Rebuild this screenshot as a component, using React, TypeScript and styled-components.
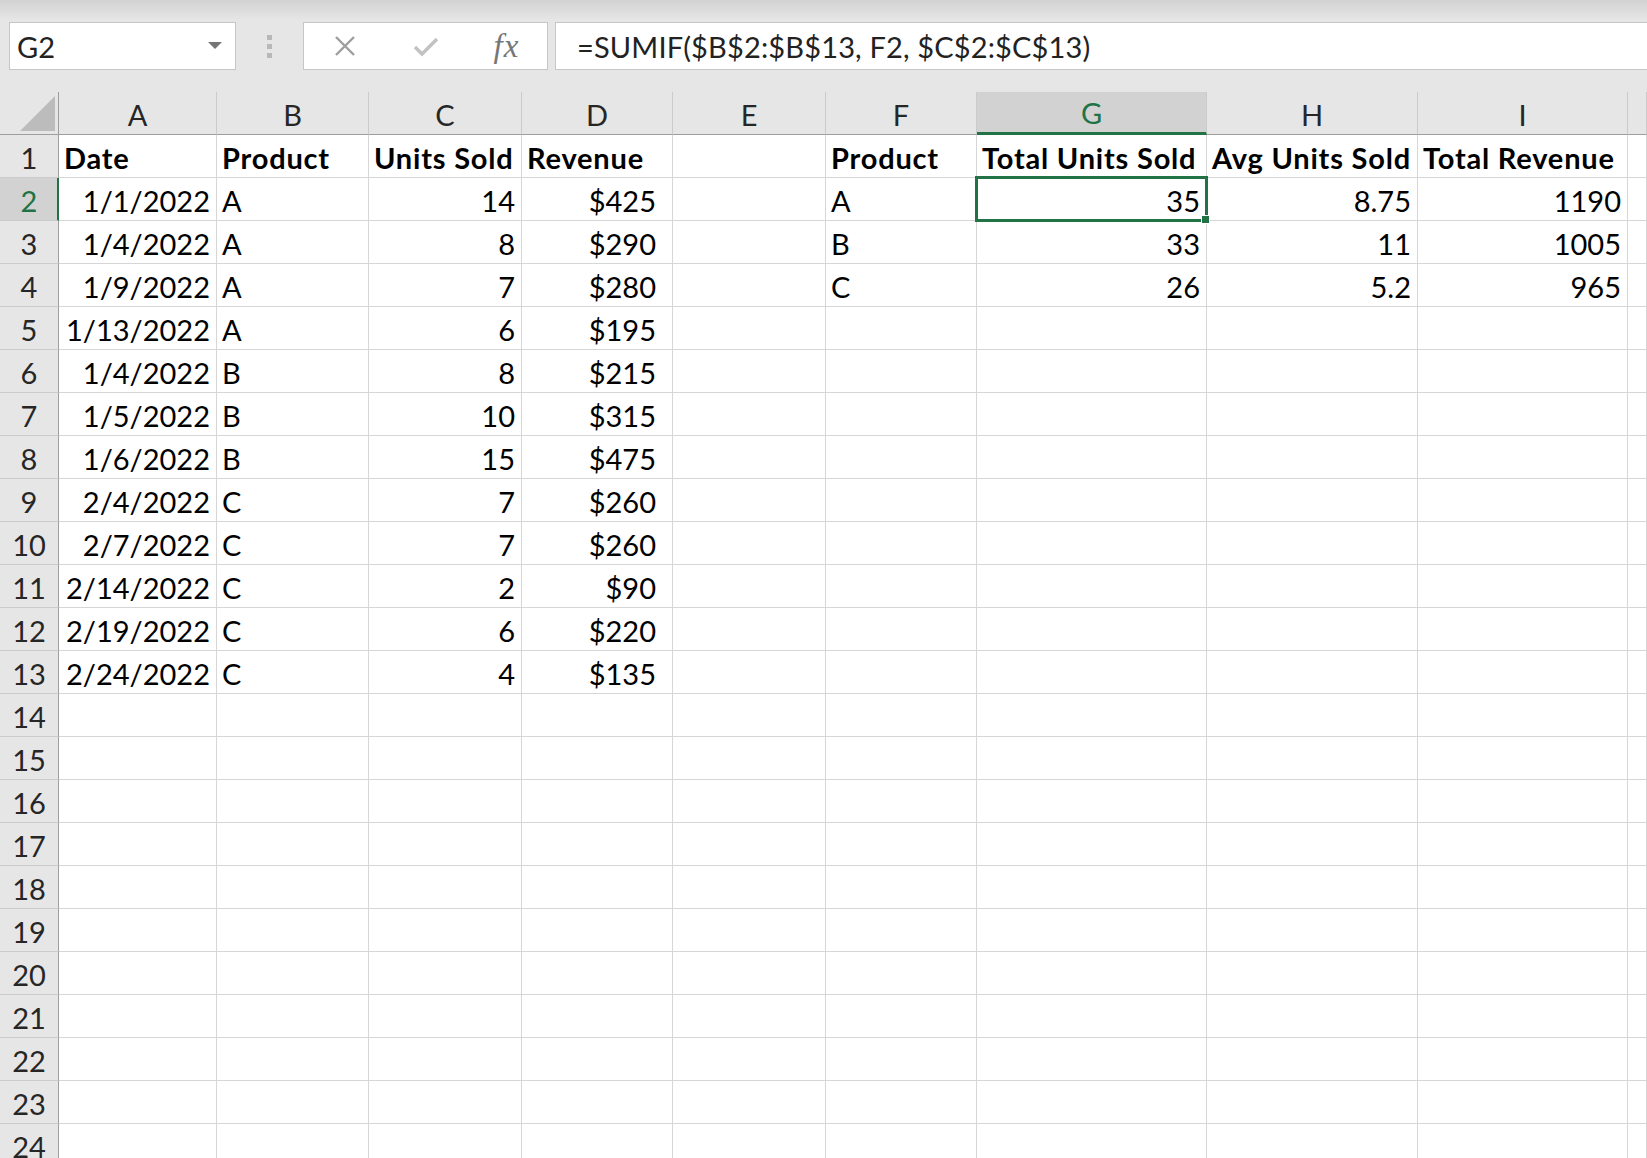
import React from 'react';
import styled, {createGlobalStyle, css} from 'styled-components';

const GREEN = '#217346';

const GlobalStyle = createGlobalStyle`
  html, body {
    margin: 0;
    padding: 0;
  }
  body {
    font-family: Lato, "Noto Sans", sans-serif;
    background: #e6e6e6;
  }
`;

const Page = styled.div`
  width: 100vw;
  height: 100vh;
  overflow: hidden;
  display: flex;
  flex-direction: column;
  background: linear-gradient(#d2d2d2 0, #e6e6e6 20px);
`;

const Toolbar = styled.div`
  display: flex;
  height: 48px;
  margin: 22px 0 22px 9px;
`;

const NameBox = styled.div`
  box-sizing: border-box;
  width: 227px;
  height: 48px;
  background: white;
  border: 1px solid #c6c6c6;
  display: flex;
  align-items: center;
  justify-content: space-between;
  padding: 0 13px 0 7px;
  font-size: 29px;
  color: #222;
`;

const Grip = styled.div`
  width: 67px;
  display: flex;
  align-items: center;
  justify-content: center;
`;

const FxBox = styled.div`
  box-sizing: border-box;
  width: 245px;
  height: 48px;
  background: white;
  border: 1px solid #c6c6c6;
  display: flex;
  align-items: center;
`;

const FxSlot = styled.div`
  width: 81px;
  display: flex;
  justify-content: center;
  align-items: center;
`;

const FxLabel = styled.span`
  font-family: "Liberation Serif", serif;
  font-style: italic;
  font-size: 33px;
  color: #777;
  letter-spacing: 1px;
`;

const FormulaInput = styled.div`
  box-sizing: border-box;
  flex: 1;
  margin-left: 7px;
  height: 48px;
  background: white;
  border: 1px solid #c6c6c6;
  border-right: none;
  display: flex;
  align-items: center;
  padding-left: 21px;
  font-size: 29px;
  letter-spacing: 0.15px;
  color: #222;
  white-space: nowrap;
`;

const Sheet = styled.div`
  display: grid;
  grid-template-columns: 59px 158px 152px 153px 151px 153px 151px 230px 211px 210px 1fr;
  grid-auto-rows: 43px;
  background: white;
`;

const Corner = styled.div`
  box-sizing: border-box;
  background: #e6e6e6;
  border-right: 1px solid #9e9e9e;
  border-bottom: 1px solid #9e9e9e;
  display: flex;
  align-items: flex-end;
  justify-content: flex-end;
  padding: 0 3px 3px 0;
`;

const ColHead = styled.div<{$active?: boolean}>`
  box-sizing: border-box;
  background: #e6e6e6;
  border-right: 1px solid #cbcbcb;
  border-bottom: 1px solid #9e9e9e;
  display: flex;
  align-items: center;
  justify-content: center;
  padding-top: 3px;
  font-size: 29px;
  color: #262626;
  ${p => p.$active && css`
    background: #d2d2d2;
    border-bottom: 3px solid ${GREEN};
    padding-top: 1px;
    color: ${GREEN};
  `}
`;

const RowHead = styled.div<{$active?: boolean}>`
  box-sizing: border-box;
  background: #e6e6e6;
  border-right: 1px solid #9e9e9e;
  border-bottom: 1px solid #cbcbcb;
  display: flex;
  align-items: center;
  justify-content: center;
  padding-top: 3px;
  font-size: 29px;
  color: #262626;
  ${p => p.$active && css`
    background: #d2d2d2;
    border-right: 2px solid ${GREEN};
    padding-left: 1px;
    color: ${GREEN};
  `}
`;

const Cell = styled.div<{$right?: boolean; $bold?: boolean; $pad?: number}>`
  box-sizing: border-box;
  position: relative;
  border-right: 1px solid #d6d6d6;
  border-bottom: 1px solid #d6d6d6;
  display: flex;
  align-items: center;
  justify-content: ${p => (p.$right ? 'flex-end' : 'flex-start')};
  padding: 3px ${p => p.$pad ?? 6}px 0 5px;
  font-size: 29px;
  font-weight: ${p => (p.$bold ? 700 : 400)};
  letter-spacing: ${p => (p.$bold ? '0.8px' : '0')};
  color: #000;
  white-space: nowrap;
`;

const Selection = styled.div`
  position: absolute;
  top: -2px;
  left: -2px;
  right: -2px;
  bottom: -2px;
  border: 3px solid ${GREEN};
  z-index: 2;
  pointer-events: none;
`;

const Handle = styled.div`
  position: absolute;
  right: -5px;
  bottom: -5px;
  width: 7px;
  height: 7px;
  background: ${GREEN};
  border: 1px solid white;
`;

type Row = [string, string, string, string];

const data: Row[] = [
  ['1/1/2022', 'A', '14', '$425'],
  ['1/4/2022', 'A', '8', '$290'],
  ['1/9/2022', 'A', '7', '$280'],
  ['1/13/2022', 'A', '6', '$195'],
  ['1/4/2022', 'B', '8', '$215'],
  ['1/5/2022', 'B', '10', '$315'],
  ['1/6/2022', 'B', '15', '$475'],
  ['2/4/2022', 'C', '7', '$260'],
  ['2/7/2022', 'C', '7', '$260'],
  ['2/14/2022', 'C', '2', '$90'],
  ['2/19/2022', 'C', '6', '$220'],
  ['2/24/2022', 'C', '4', '$135'],
];

const summary: Row[] = [
  ['A', '35', '8.75', '1190'],
  ['B', '33', '11', '1005'],
  ['C', '26', '5.2', '965'],
];

const columns = ['A', 'B', 'C', 'D', 'E', 'F', 'G', 'H', 'I', ''];

function Toolbars() {
  return (
    <Toolbar>
      <NameBox>
        <span>G2</span>
        <svg width="14" height="8" viewBox="0 0 14 8">
          <path d="M0 0H14L7 7Z" fill="#767676"/>
        </svg>
      </NameBox>
      <Grip>
        <svg width="5" height="23" viewBox="0 0 5 23">
          <rect x="0" y="0" width="5" height="5" fill="#b8b8b8"/>
          <rect x="0" y="9" width="5" height="5" fill="#b8b8b8"/>
          <rect x="0" y="18" width="5" height="5" fill="#b8b8b8"/>
        </svg>
      </Grip>
      <FxBox>
        <FxSlot>
          <svg width="22" height="20" viewBox="0 0 22 20">
            <path d="M2 1L20 19M20 1L2 19" stroke="#9e9e9e" strokeWidth="2.4"/>
          </svg>
        </FxSlot>
        <FxSlot>
          <svg width="26" height="21" viewBox="0 0 26 21">
            <path d="M2 11L9 18L24 3" stroke="#c2c2c2" strokeWidth="3.4" fill="none"/>
          </svg>
        </FxSlot>
        <FxSlot>
          <FxLabel>fx</FxLabel>
        </FxSlot>
      </FxBox>
      <FormulaInput>=SUMIF($B$2:$B$13, F2, $C$2:$C$13)</FormulaInput>
    </Toolbar>
  );
}

function sheetRow(r: number): React.ReactNode[] {
  const cells: React.ReactNode[] = [];
  const src = r >= 2 && r <= 13 ? data[r - 2] : null;
  const sum = r >= 2 && r <= 4 ? summary[r - 2] : null;

  if (r === 1) {
    cells.push(<Cell key="a" $bold>Date</Cell>);
    cells.push(<Cell key="b" $bold>Product</Cell>);
    cells.push(<Cell key="c" $bold>Units Sold</Cell>);
    cells.push(<Cell key="d" $bold>Revenue</Cell>);
    cells.push(<Cell key="e"/>);
    cells.push(<Cell key="f" $bold>Product</Cell>);
    cells.push(<Cell key="g" $bold>Total Units Sold</Cell>);
    cells.push(<Cell key="h" $bold>Avg Units Sold</Cell>);
    cells.push(<Cell key="i" $bold>Total Revenue</Cell>);
    cells.push(<Cell key="j"/>);
    return cells;
  }

  cells.push(<Cell key="a" $right>{src?.[0]}</Cell>);
  cells.push(<Cell key="b">{src?.[1]}</Cell>);
  cells.push(<Cell key="c" $right>{src?.[2]}</Cell>);
  cells.push(<Cell key="d" $right $pad={16}>{src?.[3]}</Cell>);
  cells.push(<Cell key="e"/>);
  cells.push(<Cell key="f">{sum?.[0]}</Cell>);
  cells.push(
    <Cell key="g" $right>
      {sum?.[1]}
      {r === 2 && (
        <Selection>
          <Handle/>
        </Selection>
      )}
    </Cell>
  );
  cells.push(<Cell key="h" $right>{sum?.[2]}</Cell>);
  cells.push(<Cell key="i" $right>{sum?.[3]}</Cell>);
  cells.push(<Cell key="j"/>);
  return cells;
}

export default function App() {
  const rows = Array.from({length: 24}, (_, i) => i + 1);
  return (
    <Page>
      <GlobalStyle/>
      <Toolbars/>
      <Sheet>
        <Corner>
          <svg width="35" height="35" viewBox="0 0 35 35">
            <path d="M35 0V35H0Z" fill="#bcbcbc"/>
          </svg>
        </Corner>
        {columns.map((c, i) => (
          <ColHead key={i} $active={c === 'G'}>{c}</ColHead>
        ))}
        {rows.map(r => (
          <React.Fragment key={r}>
            <RowHead $active={r === 2}>{r}</RowHead>
            {sheetRow(r)}
          </React.Fragment>
        ))}
      </Sheet>
    </Page>
  );
}
